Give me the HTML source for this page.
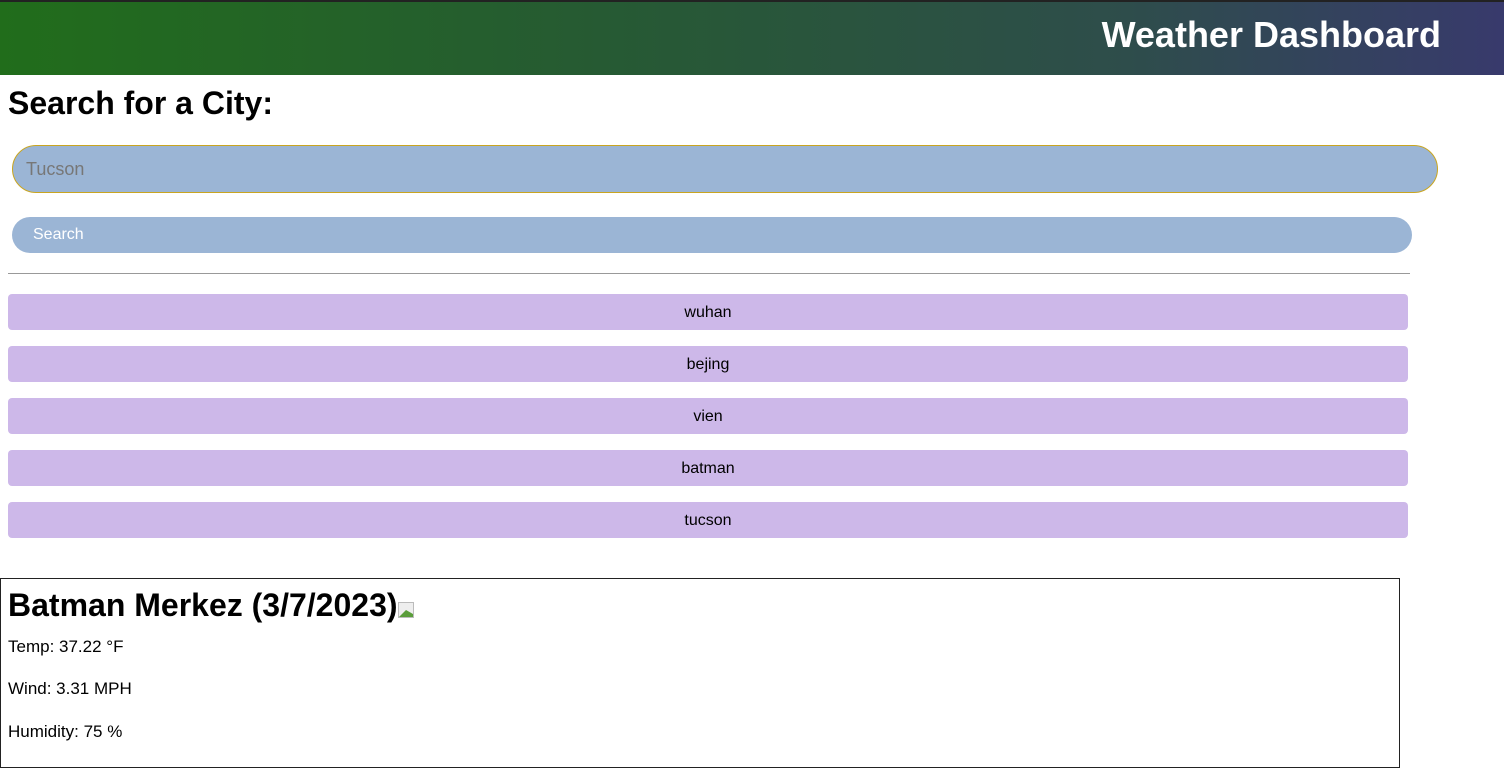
<!DOCTYPE html>
<html><head><style>
*{box-sizing:border-box}
body{margin:0;font-family:"Liberation Sans",Arial,sans-serif;background:#fff;width:1504px;height:776px;overflow:hidden;position:relative}
.hdr{position:absolute;left:0;top:0;width:1504px;height:75px;background:linear-gradient(90deg,#216d1b 0%,#265a33 40%,#2e4d4b 75%,#383a6c 100%);border-top:2px solid #222}
.hdr h1{position:absolute;right:63px;top:12px;margin:0;color:#fff;font-size:36px;font-weight:bold}
.t{position:absolute;left:8px;top:85px;margin:0;font-size:32px;font-weight:bold}
.inp{position:absolute;left:12px;top:145px;width:1426px;height:48px;border:1px solid #c9a520;border-radius:24px;background:#9bb5d5;color:#777;font-size:18px;padding:13px 0 0 13px}
.btn{position:absolute;left:12px;top:217px;width:1400px;height:36px;border-radius:18px;background:#9bb5d5;color:#fff;font-size:16px;padding:9px 0 0 21px}
.hr{position:absolute;left:8px;top:273px;width:1402px;height:0;border-top:1px solid #999}
.c{position:absolute;left:8px;width:1400px;height:36px;background:#cdb8e9;border-radius:4px;text-align:center;font-size:16px;line-height:37px}
.box{position:absolute;left:0;top:578px;width:1400px;height:190px;border:1px solid #222}
.box h2{margin:0;position:absolute;left:7px;top:8px;font-size:32px;font-weight:bold}
.box p{position:absolute;left:7px;margin:0;font-size:17px}
</style></head><body>
<div class="hdr"><h1>Weather Dashboard</h1></div>
<h2 class="t">Search for a City:</h2>
<div class="inp">Tucson</div>
<div class="btn">Search</div>
<div class="hr"></div>
<div class="c" style="top:294px">wuhan</div>
<div class="c" style="top:346px">bejing</div>
<div class="c" style="top:398px">vien</div>
<div class="c" style="top:450px">batman</div>
<div class="c" style="top:502px">tucson</div>
<div class="box">
<h2>Batman Merkez (3/7/2023)<svg width="16" height="16" style="vertical-align:-2px"><rect x="0.5" y="0.5" width="15" height="15" fill="#eee" stroke="#bbb"/><path d="M1 15 L8 8 L15 12 L15 15Z" fill="#5a9d3a"/></svg></h2>
<p style="top:58px">Temp: 37.22 °F</p>
<p style="top:100px">Wind: 3.31 MPH</p>
<p style="top:143px">Humidity: 75 %</p>
</div>
</body></html>
